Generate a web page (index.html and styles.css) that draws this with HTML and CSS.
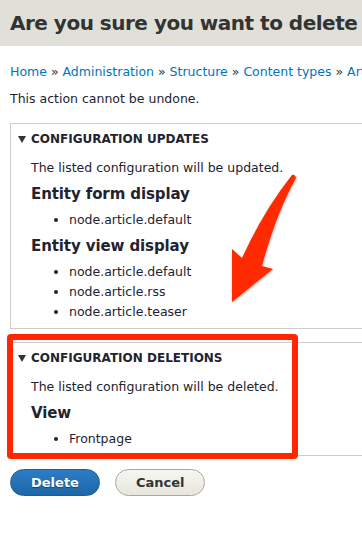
FILE: index.html
```html
<!DOCTYPE html>
<html>
  <head>
    <meta name="viewport" content="width=device-width, initial-scale=1" />
    <link rel="stylesheet" href="styles.css">
  </head>
  <body>
    <div class="page">
      <header class="page-header">
        <h1>Are you sure you want to delete the content type Article?</h1>
      </header>

      <main class="content">
        <nav class="breadcrumb">
          <a href="#">Home</a> » <a href="#">Administration</a> » <a href="#">Structure</a> »
          <a href="#">Content types</a> » <a href="#">Article</a>
        </nav>
        <p class="warning">This action cannot be undone.</p>

        <details class="config" open>
          <summary>
            <svg class="caret" width="8" height="7" viewBox="0 0 8 7"><path d="M0 0H8L4 7Z" /></svg>
            Configuration updates
          </summary>
          <div class="config-body">
            <p>The listed configuration will be updated.</p>
            <h3>Entity form display</h3>
            <ul>
              <li>node.article.default</li>
            </ul>
            <h3>Entity view display</h3>
            <ul>
              <li>node.article.default</li>
              <li>node.article.rss</li>
              <li>node.article.teaser</li>
            </ul>
          </div>
        </details>

        <details class="config" open>
          <summary>
            <svg class="caret" width="8" height="7" viewBox="0 0 8 7"><path d="M0 0H8L4 7Z" /></svg>
            Configuration deletions
          </summary>
          <div class="config-body">
            <p>The listed configuration will be deleted.</p>
            <h3>View</h3>
            <ul>
              <li>Frontpage</li>
            </ul>
          </div>
        </details>

        <div class="form-actions">
          <button class="button button-primary">Delete</button>
          <button class="button">Cancel</button>
        </div>
      </main>

      <!-- annotation overlay -->
      <div class="highlight"></div>
      <svg class="arrow" width="362" height="533" viewBox="0 0 362 533">
        <defs>
          <filter id="shadow" x="-20%" y="-20%" width="140%" height="140%">
            <feDropShadow dx="0.5" dy="1" stdDeviation="1" flood-color="#000" flood-opacity="0.3" />
          </filter>
        </defs>
        <path
          d="M292 175 Q295 174 296 178 Q276 214 262 266 L273 269 L232 302 L232 249 L242 258 Q264 210 292 175 Z"
          fill="#ff2a00"
          filter="url(#shadow)"
        />
      </svg>
    </div>
  </body>
</html>
```

FILE: styles.css
```css
* {
  box-sizing: border-box;
}
html,
body {
  margin: 0;
  overflow: hidden;
}
body {
  font-family: "DejaVu Sans", "Lucida Grande", sans-serif;
  font-size: 12.5px;
  color: #222330;
  background: #fff;
}
.page {
  position: relative;
  width: 640px;
  height: 533px;
}

/* Grey title band */
.page-header {
  background: #e0e0d8;
  height: 46px;
  padding: 9px 10px;
  white-space: nowrap;
}
.page-header h1 {
  margin: 0;
  font-size: 20px;
  line-height: 29px;
  letter-spacing: -0.5px;
  font-weight: bold;
  color: #333;
}

.content {
  padding: 0 10px;
}
.breadcrumb {
  margin-top: 16px;
  line-height: 20px;
  color: #333;
  white-space: nowrap;
}
.breadcrumb a {
  color: #0074bd;
  text-decoration: none;
}
.warning {
  margin: 7px 0 0;
  line-height: 20px;
}

/* Collapsible config boxes */
.config {
  border: 1px solid #ccc;
  margin-top: 14px;
  padding: 5px 0 6px;
}
.config + .config {
  margin-top: 13px;
}
.config summary {
  list-style: none;
  display: flex;
  align-items: center;
  gap: 5px;
  padding-left: 7px;
  line-height: 20px;
  font-size: 12px;
  font-weight: bold;
  text-transform: uppercase;
  color: #222330;
}
.config summary::-webkit-details-marker {
  display: none;
}
.caret {
  fill: #333;
}
.config-body {
  padding-left: 20px;
}
.config-body p {
  margin: 9px 0 0;
  line-height: 20px;
}
.config-body h3 {
  margin: 5px 0;
  font-size: 15px;
  line-height: 22px;
  letter-spacing: -0.1px;
}
.config-body ul {
  margin: 0;
  padding-left: 38px;
}
.config-body li {
  line-height: 20px;
}

/* Buttons */
.form-actions {
  display: flex;
  gap: 15px;
  margin-top: 13px;
}
.button {
  font-family: inherit;
  font-size: 13px;
  font-weight: bold;
  height: 27px;
  padding: 0 20px;
  border-radius: 14px;
  border: 1px solid #a6a6a6;
  background: linear-gradient(#f6f6f2, #e8e6dc);
  color: #333;
}
.button-primary {
  border-color: #1e5c90;
  background: linear-gradient(#2c7dc6, #1d67a8);
  color: #fff;
  text-shadow: 0 1px 1px rgba(0, 0, 0, 0.4);
}

/* Red annotation */
.highlight {
  position: absolute;
  left: 7px;
  top: 334px;
  width: 291px;
  height: 125px;
  border: 6px solid #ff2600;
  border-radius: 4px;
}
.arrow {
  position: absolute;
  left: 0;
  top: 0;
}
```
